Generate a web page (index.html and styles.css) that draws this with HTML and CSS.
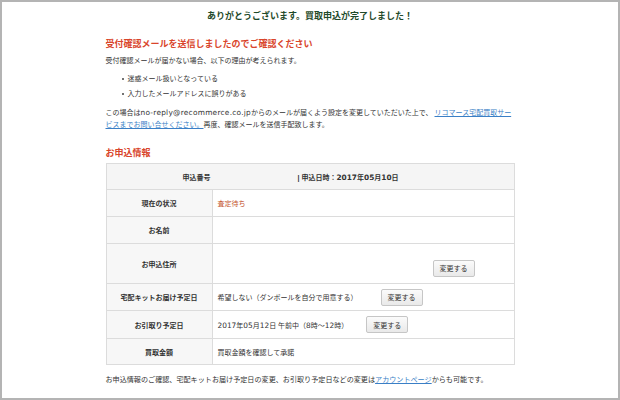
FILE: index.html
```html
<!DOCTYPE html>
<html lang="ja">
<head>
<meta charset="utf-8">
<title>買取申込完了</title>
<link rel="stylesheet" href="styles.css">
</head>
<body>
<div class="frame">
  <h1 class="title">ありがとうございます。買取申込が完了しました！</h1>
  <div class="content">
    <h2 class="heading">受付確認メールを送信しましたのでご確認ください</h2>
    <p class="text first">受付確認メールが届かない場合、以下の理由が考えられます。</p>
    <ul class="reasons">
      <li>迷惑メール扱いとなっている</li>
      <li>入力したメールアドレスに誤りがある</li>
    </ul>
    <p class="text note">この場合は<span class="lat mail">no-reply@recommerce.co.jp</span>からのメールが届くよう設定を変更していただいた上で、 <a href="#" class="link">リコマース宅配買取サービスまでお問い合せください。</a>再度、確認メールを送信手配致します。</p>
    <h3 class="subheading">お申込情報</h3>
    <div class="info">
      <div class="row head">
        <span class="head-no">申込番号</span><span class="head-date">| 申込日時：<span class="lat">2017</span>年<span class="lat">05</span>月<span class="lat">10</span>日</span>
      </div>
      <div class="row r27">
        <div class="label">現在の状況</div>
        <div class="value status">査定待ち</div>
      </div>
      <div class="row r27">
        <div class="label">お名前</div>
        <div class="value"></div>
      </div>
      <div class="row r40">
        <div class="label">お申込住所</div>
        <div class="value address"><button class="btn">変更する</button></div>
      </div>
      <div class="row r27">
        <div class="label">宅配キットお届け予定日</div>
        <div class="value">希望しない（ダンボールを自分で用意する）<button class="btn kit">変更する</button></div>
      </div>
      <div class="row r28">
        <div class="label">お引取り予定日</div>
        <div class="value"><span><span class="lat">2017</span>年<span class="lat">05</span>月<span class="lat">12</span>日 午前中（<span class="lat">8</span>時〜<span class="lat">12</span>時）</span><button class="btn pick">変更する</button></div>
      </div>
      <div class="row r26">
        <div class="label">買取金額</div>
        <div class="value">買取金額を確認して承諾</div>
      </div>
    </div>
    <p class="text footer">お申込情報のご確認、宅配キットお届け予定日の変更、お引取り予定日などの変更は<a href="#" class="link">アカウントページ</a>からも可能です。</p>
  </div>
</div>
</body>
</html>
```

FILE: styles.css
```css
* { box-sizing: border-box; }
html, body { margin: 0; padding: 0; background: #fff; }
body {
  font-family: "Liberation Sans", "Noto Sans CJK JP", sans-serif;
  color: #333;
  font-size: 7px;
}
.frame {
  width: 620px;
  height: 400px;
  border: 2px solid #b4b4b4;
  padding-top: 8px;
  overflow: hidden;
}
.title {
  margin: 0;
  text-align: center;
  font-size: 9px;
  line-height: 13px;
  font-weight: bold;
  color: #1f4a2a;
}
.content {
  width: 409px;
  margin: 0 auto;
}
.heading {
  margin: 15px 0 0;
  font-size: 9px;
  line-height: 13px;
  font-weight: bold;
  color: #d9452b;
}
.text {
  margin: 0;
  line-height: 12px;
}
.lat {
  font-family: "DejaVu Sans", "Noto Sans CJK JP", sans-serif;
  font-size: 7.4px;
}
.mail { letter-spacing: 0.25px; }
.first { margin-top: 4px; }
.reasons {
  list-style: none;
  margin: 4px 0 0;
  padding: 0 0 0 22px;
}
.reasons li {
  position: relative;
  line-height: 15px;
}
.reasons li::before {
  content: "";
  position: absolute;
  left: -6px;
  top: 7px;
  width: 2px;
  height: 2px;
  border-radius: 50%;
  background: #444;
}
.note { margin-top: 6px; }
.link {
  color: #3a7fc6;
  text-decoration: underline;
}
.subheading {
  margin: 16px 0 0;
  font-size: 9px;
  line-height: 13px;
  font-weight: bold;
  color: #d9452b;
}
.info {
  margin-top: 3px;
  border: 1px solid #dcdcdc;
}
.row {
  display: grid;
  grid-template-columns: 106px 1fr;
  border-top: 1px solid #dcdcdc;
}
.row.head {
  display: flex;
  align-items: center;
  border-top: 0;
  height: 25px;
  background: #f5f5f5;
  font-weight: bold;
  padding-left: 76px;
}
.head-date { margin-left: 87px; }
.r26 { height: 26px; }
.r27 { height: 27px; }
.r28 { height: 28px; }
.r40 { height: 40px; }
.label {
  display: flex;
  align-items: center;
  justify-content: center;
  background: #f7f7f7;
  border-right: 1px solid #dcdcdc;
  font-weight: bold;
}
.value {
  display: flex;
  align-items: center;
  padding-left: 5px;
}
.status { color: #c5562f; }
.address {
  justify-content: flex-end;
  padding-right: 39px;
  padding-top: 9px;
}
.btn {
  width: 42px;
  height: 17px;
  padding: 0;
  border: 1px solid #c6c6c6;
  border-radius: 2px;
  background: linear-gradient(#fbfbfb, #e9e9e9);
  font-family: inherit;
  font-size: 7px;
  color: #333;
}
.kit { margin-left: 23px; }
.pick { margin-left: 18px; }
.footer {
  margin-top: 9px;
  font-size: 7.1px;
}
```
